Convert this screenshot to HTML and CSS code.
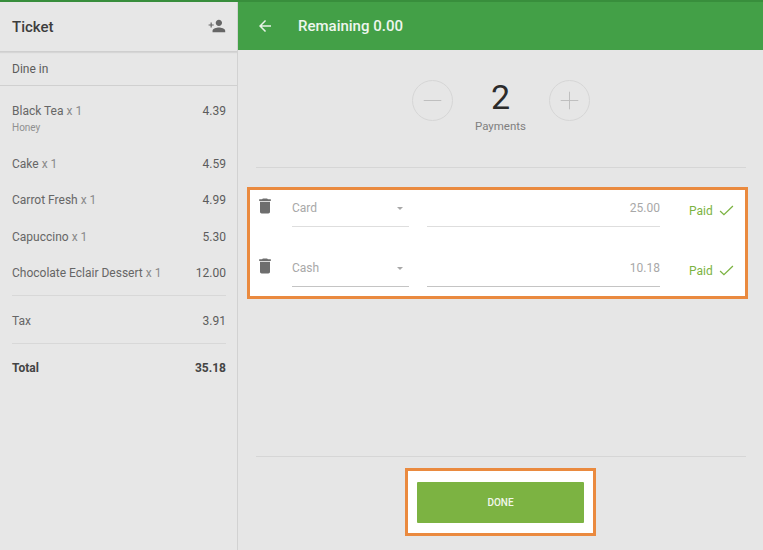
FILE: index.html
```html
<!DOCTYPE html>
<html lang="en">
<head>
<meta charset="utf-8">
<title>Split payment</title>
<link rel="stylesheet" href="styles.css">
</head>
<body>
<div class="topline"></div>
<div class="app">
  <aside class="ticket">
    <header class="ticket-head">
      <h1>Ticket</h1>
      <svg class="add-user" viewBox="0 0 24 20" width="19" height="16"><path d="M15 10c2.200 0 4-1.800 4-4s-1.800-4-4-4-4 1.800-4 4 1.800 4 4 4zM6 8V5.500H4.500V8H2v1.500h2.500V12H6V9.500h2.500V8H6zm9 4c-2.700 0-8 1.300-8 4v2h16v-2c0-2.700-5.300-4-8-4z"/></svg>
    </header>
    <div class="dining">Dine in</div>
    <ul class="items">
      <li class="item item-first"><div><span class="name">Black Tea</span> <span class="qty">x 1</span><div class="mod">Honey</div></div><span class="price">4.39</span></li>
      <li class="item"><div><span class="name">Cake</span> <span class="qty">x 1</span></div><span class="price">4.59</span></li>
      <li class="item"><div><span class="name">Carrot Fresh</span> <span class="qty">x 1</span></div><span class="price">4.99</span></li>
      <li class="item"><div><span class="name">Capuccino</span> <span class="qty">x 1</span></div><span class="price">5.30</span></li>
      <li class="item"><div><span class="name">Chocolate Eclair Dessert</span> <span class="qty">x 1</span></div><span class="price">12.00</span></li>
    </ul>
    <div class="summary summary-tax"><span>Tax</span><span class="price">3.91</span></div>
    <div class="summary summary-total"><span>Total</span><span>35.18</span></div>
  </aside>
  <main class="pay">
    <header class="pay-head">
      <svg class="back" viewBox="0 0 24 24" width="18" height="18"><path d="M20 11H7.800l5.600-5.600L12 4l-8 8 8 8 1.400-1.400L7.800 13H20z"/></svg>
      <span class="remaining">Remaining 0.00</span>
    </header>
    <section class="stepper">
      <div class="round"><svg viewBox="0 0 40 40" width="39" height="39"><path d="M11 20h18"/></svg></div>
      <div class="count"><div class="num">2</div><div class="lbl">Payments</div></div>
      <div class="round"><svg viewBox="0 0 40 40" width="39" height="39"><path d="M11 20h18M20 11v18"/></svg></div>
    </section>
    <hr class="rule rule-top">
    <section class="payments">
      <div class="row">
        <svg class="trash" viewBox="0 0 24 24" width="20" height="20"><path d="M6 19c0 1.100.9 2 2 2h8c1.100 0 2-.9 2-2V7H6v12zM19 4h-3.500l-1-1h-5l-1 1H5v2h14V4z"/></svg>
        <div class="field select light"><span>Card</span><i class="caret"></i></div>
        <div class="field amount light">25.00</div>
        <div class="paid">Paid<svg viewBox="0 0 16 12" width="15" height="11"><path d="M1 6.500l4.200 4L15 1"/></svg></div>
      </div>
      <div class="row">
        <svg class="trash" viewBox="0 0 24 24" width="20" height="20"><path d="M6 19c0 1.100.9 2 2 2h8c1.100 0 2-.9 2-2V7H6v12zM19 4h-3.500l-1-1h-5l-1 1H5v2h14V4z"/></svg>
        <div class="field select"><span>Cash</span><i class="caret"></i></div>
        <div class="field amount">10.18</div>
        <div class="paid">Paid<svg viewBox="0 0 16 12" width="15" height="11"><path d="M1 6.500l4.200 4L15 1"/></svg></div>
      </div>
    </section>
    <div class="spacer"></div>
    <hr class="rule">
    <div class="done-wrap"><div class="done-frame"><button class="done">DONE</button></div></div>
  </main>
</div>
</body>
</html>
```
FILE: styles.css
```css
* { box-sizing: border-box; }
html, body { margin: 0; height: 100%; }
body {
  width: 763px; height: 550px; overflow: hidden;
  background: #e6e6e6; color: #555;
  font-family: Roboto, "Liberation Sans", sans-serif;
  font-size: 12px;
  display: flex; flex-direction: column;
}
.topline { height: 2px; background: #388e3c; flex: none; }
.app { flex: 1; display: flex; min-height: 0; }

.ticket { width: 238px; flex: none; border-right: 1px solid #d2d2d2; background: #e7e7e7; }
.ticket-head {
  height: 50px; padding: 0 12px; display: flex; align-items: center; justify-content: space-between;
  border-bottom: 1px solid #cfcfcf; box-shadow: 0 1px 1px #d6d6d6;
}
.ticket-head h1 { margin: 0; font-size: 15px; font-weight: 500; color: #3d3d3d; }
.add-user { fill: #666; margin: -1px -1px 0 0; }
.dining { height: 34px; padding: 0 12px; display: flex; align-items: center; border-bottom: 1px solid #d0d0d0; color: #5c5c5c; }
.items { list-style: none; margin: 0 11px 0 12px; padding: 7px 0 4px; border-bottom: 1px solid #d8d8d8; }
.item { height: 36.3px; display: flex; justify-content: space-between; align-items: center; color: #666; }
.item-first { height: 53px; align-items: flex-start; padding-top: 11px; }
.qty { color: #8a8a8a; }
.mod { font-size: 10px; color: #909090; margin-top: 4px; }
.price { color: #5c5c5c; }
.summary { margin: 0 11px 0 12px; height: 48px; display: flex; justify-content: space-between; align-items: center; }
.summary-tax { border-bottom: 1px solid #d8d8d8; color: #666; padding-top: 2px; }
.summary-total { font-weight: 700; color: #444; }

.pay { flex: 1; display: flex; flex-direction: column; min-width: 0; }
.pay-head { height: 48px; background: #43a047; display: flex; align-items: center; padding-left: 18px; color: #eef6ee; flex: none; }
.back { fill: #e8f3e8; margin-right: 24px; }
.remaining { font-size: 15px; font-weight: 500; }
.stepper { display: flex; justify-content: center; align-items: flex-start; gap: 21px; padding: 30px 0 0; height: 117px; flex: none; }
.round { width: 41px; height: 41px; border: 1px solid #d6d6d6; border-radius: 50%; }
.round svg { display: block; fill: none; stroke: #bdbdbd; stroke-width: 1; }
.count { width: 54px; text-align: center; margin-top: -3px; }
.num { font-size: 34px; line-height: 40px; color: #2b2b2b; }
.lbl { font-size: 11.500px; line-height: 14px; color: #808080; white-space: nowrap; margin: 2px -8px 0; }
.rule { margin: 0 17px 0 18px; border: 0; border-top: 1px solid #d6d6d6; flex: none; }
.rule-top { margin-bottom: 19px; }
.payments { margin: 0 15px 0 9px; height: 112px; border: 3px solid #ea8a3f; background: #fff; flex: none; }
.row { height: 60px; display: flex; }
.trash { fill: #6e6e6e; margin: 6px 0 0 5px; flex: none; }
.field { height: 37px; border-bottom: 1px solid #c4c4c4; color: #a8a8a8; display: flex; align-items: center; }
.light { border-bottom-color: #dedede; }
.select { width: 117px; margin-left: 17px; justify-content: space-between; padding-right: 6px; }
.caret { width: 0; height: 0; border: 3.500px solid transparent; border-top-color: #a8a8a8; border-bottom: 0; }
.amount { width: 233px; margin-left: 18px; justify-content: flex-end; }
.paid { margin-left: 29px; padding-top: 14px; color: #7cb342; display: flex; gap: 6px; height: 37px; align-items: flex-start; }
.paid svg { fill: none; stroke: #7cb342; stroke-width: 1.400; margin-top: 1px; }
.spacer { flex: 1; }
.done-wrap { flex: none; height: 93px; display: flex; justify-content: center; padding-top: 11px; }
.done-frame { width: 191px; height: 68px; border: 3px solid #ea8a3f; background: #fff; display: flex; align-items: center; justify-content: center; }
.done { width: 167px; height: 41px; border: 0; border-radius: 1px; background: #7cb342; color: #f3f8ec; font: 500 10px Roboto, "Liberation Sans", sans-serif; }
```
